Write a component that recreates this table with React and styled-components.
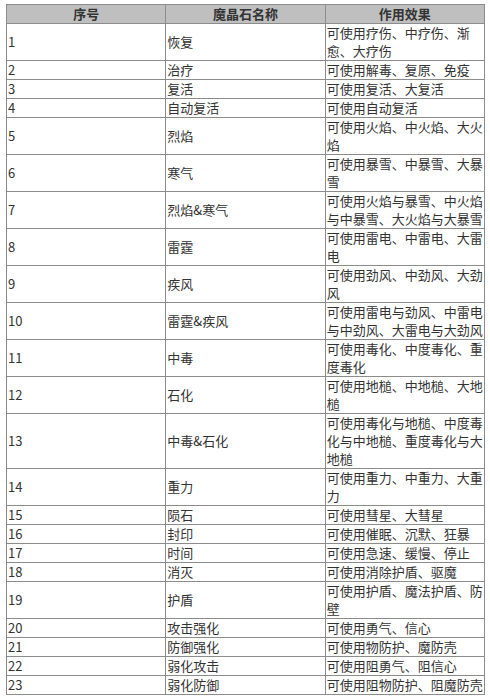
import React from 'react'
import styled, { createGlobalStyle } from 'styled-components'

const GlobalStyle = createGlobalStyle`
  body {
    margin: 0;
    background: #ffffff;
    font-family: "Noto Sans CJK SC", "Noto Sans", sans-serif;
  }
`

const Page = styled.div`
  padding: 4px 5px 4px 6px;
`

const Table = styled.table`
  width: 479px;
  border-collapse: collapse;
  table-layout: fixed;
  border: 1px solid #8c8c8c;
  font-size: 13px;
  line-height: 18px;
  color: #333333;
`

const HeadCell = styled.th`
  background: #bfbfbf;
  border: 1px solid #8c8c8c;
  font-weight: 700;
  text-align: center;
  padding: 0 1px;
  color: #333333;
`

const Cell = styled.td`
  border: 1px solid #8c8c8c;
  padding: 0 1px;
  vertical-align: middle;
  text-align: left;
`

const rows = [
  ['恢复', '可使用疗伤、中疗伤、渐愈、大疗伤'],
  ['治疗', '可使用解毒、复原、免疫'],
  ['复活', '可使用复活、大复活'],
  ['自动复活', '可使用自动复活'],
  ['烈焰', '可使用火焰、中火焰、大火焰'],
  ['寒气', '可使用暴雪、中暴雪、大暴雪'],
  ['烈焰&寒气', '可使用火焰与暴雪、中火焰与中暴雪、大火焰与大暴雪'],
  ['雷霆', '可使用雷电、中雷电、大雷电'],
  ['疾风', '可使用劲风、中劲风、大劲风'],
  ['雷霆&疾风', '可使用雷电与劲风、中雷电与中劲风、大雷电与大劲风'],
  ['中毒', '可使用毒化、中度毒化、重度毒化'],
  ['石化', '可使用地槌、中地槌、大地槌'],
  ['中毒&石化', '可使用毒化与地槌、中度毒化与中地槌、重度毒化与大地槌'],
  ['重力', '可使用重力、中重力、大重力'],
  ['陨石', '可使用彗星、大彗星'],
  ['封印', '可使用催眠、沉默、狂暴'],
  ['时间', '可使用急速、缓慢、停止'],
  ['消灭', '可使用消除护盾、驱魔'],
  ['护盾', '可使用护盾、魔法护盾、防壁'],
  ['攻击强化', '可使用勇气、信心'],
  ['防御强化', '可使用物防护、魔防壳'],
  ['弱化攻击', '可使用阻勇气、阻信心'],
  ['弱化防御', '可使用阻物防护、阻魔防壳'],
]

const App = () => {
  return (
    <Page>
      <GlobalStyle />
      <Table>
        <thead>
          <tr>
            <HeadCell>序号</HeadCell>
            <HeadCell>魔晶石名称</HeadCell>
            <HeadCell>作用效果</HeadCell>
          </tr>
        </thead>
        <tbody>
          {rows.map((r, i) => (
            <tr key={i}>
              <Cell>{i + 1}</Cell>
              <Cell>{r[0]}</Cell>
              <Cell>{r[1]}</Cell>
            </tr>
          ))}
        </tbody>
      </Table>
    </Page>
  )
}

export default App
